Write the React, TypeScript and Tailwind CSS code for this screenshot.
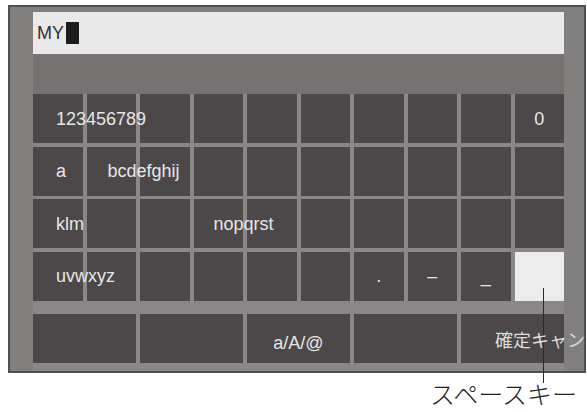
import React from "react";

type Key = { label?: string; align?: "left" | "center"; pad?: string; light?: boolean };

// 4 rows x 10 columns of the character pad
const rows: Key[][] = [
  [{ label: "123456789", align: "left", pad: "pl-[23px]" }, {}, {}, {}, {}, {}, {}, {}, {}, { label: "0" }],
  [{ label: "a", align: "left", pad: "pl-[23px]" }, { label: "bcdefghij", align: "left", pad: "pl-[21px]" }, {}, {}, {}, {}, {}, {}, {}, {}],
  [{ label: "klm", align: "left", pad: "pl-[23px]" }, {}, {}, { label: "nopqrst", align: "left", pad: "pl-[20px]" }, {}, {}, {}, {}, {}, {}],
  [{ label: "uvwxyz", align: "left", pad: "pl-[23px]" }, {}, {}, {}, {}, {}, { label: "." }, { label: "–" }, { label: "_" }, { light: true }],
];

const KeyCell = ({ k }: { k: Key }) => (
  <div
    className={`relative flex h-[49px] items-center ${
      k.light ? "bg-[#ececec]" : "bg-[#4c4849]"
    } ${k.align === "left" ? "justify-start" : "justify-center"} ${k.pad ?? ""}`}
  >
    {k.label && (
      <span className="relative z-10 whitespace-nowrap text-[18px] leading-none text-[#e6e6e6]">
        {k.label}
      </span>
    )}
  </div>
);

export default function App() {
  return (
    <div
      className="relative h-[412px] w-[587px] overflow-hidden bg-white"
      style={{ fontFamily: '"Liberation Sans", Arial, "Noto Sans CJK JP", sans-serif' }}
    >
      <div className="ml-[8px] mt-[5px] flex h-[368px] w-[578px] flex-col border-2 border-[#4f4f4f] bg-[#827f7f] pl-[23px] pt-[5px]">
        {/* text entry field */}
        <div className="flex h-[42px] w-[531px] items-center bg-[#e9e9e9] pl-[4px]">
          <span className="text-[18px] leading-none text-[#333]">MY</span>
          <span className="ml-[2px] h-[22px] w-[13px] bg-[#1c1c1c]" />
        </div>

        <div className="flex w-[531px] flex-1 flex-col bg-[#767272] pt-[40px]">
          <div className="flex flex-1 flex-col bg-[#8a8787]">
            <div className="grid grid-cols-10 gap-x-[4px] gap-y-[3.5px]">
              {rows.map((row, r) =>
                row.map((k, c) => <KeyCell key={`${r}-${c}`} k={k} />)
              )}
            </div>

            <div className="mt-[13.5px] grid grid-cols-5 gap-x-[4px]">
              <div className="h-[49px] bg-[#4c4849]" />
              <div className="h-[49px] bg-[#4c4849]" />
              <div className="flex h-[49px] items-center justify-center bg-[#4c4849] pt-[8px]">
                <span className="text-[18px] leading-none text-[#e6e6e6]">a/A/@</span>
              </div>
              <div className="h-[49px] bg-[#4c4849]" />
              <div className="relative flex h-[49px] items-center bg-[#4c4849] pl-[34px]">
                <span
                  className="relative z-10 whitespace-nowrap text-[18px] leading-none text-[#dcdcdc]"
                  style={{ fontFamily: '"Noto Sans CJK JP", sans-serif' }}
                >
                  確定キャンセル
                </span>
              </div>
            </div>
          </div>
        </div>
      </div>

      {/* callout for the space key */}
      <div className="absolute left-[543px] top-[288px] h-[95px] w-px bg-[#2a2a2a]" />
      <div
        className="absolute left-[430px] top-[381px] whitespace-nowrap text-[25px] font-light leading-none text-[#222]"
        style={{ fontFamily: '"Noto Sans CJK JP", sans-serif' }}
      >
        スペースキー
      </div>
    </div>
  );
}
